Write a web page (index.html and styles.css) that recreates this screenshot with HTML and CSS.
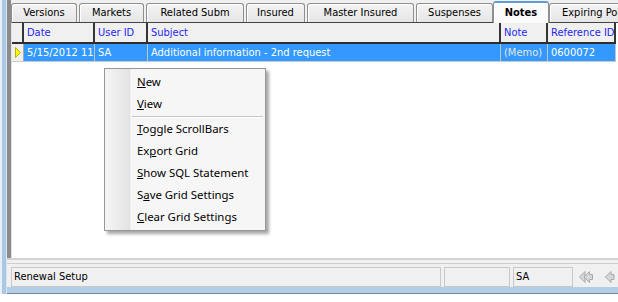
FILE: index.html
```html
<!DOCTYPE html>
<html lang="en">
<head>
    <meta charset="UTF-8">
    <title>Notes</title>
    <link rel="stylesheet" href="styles.css">
</head>
<body>
    <div class="window">
        <div class="tabpane">
            <div class="tabs">
                <div class="tab t-versions">Versions</div>
                <div class="tab t-markets">Markets</div>
                <div class="tab t-related">Related Subm</div>
                <div class="tab t-insured">Insured</div>
                <div class="tab t-master">Master Insured</div>
                <div class="tab t-suspenses">Suspenses</div>
                <div class="tab t-notes active">Notes</div>
                <div class="tab t-expiring">Expiring Policies</div>
            </div>
            <div class="grid">
                <div class="row head">
                    <div class="cell ind"></div>
                    <div class="cell">Date</div>
                    <div class="cell">User ID</div>
                    <div class="cell">Subject</div>
                    <div class="cell">Note</div>
                    <div class="cell">Reference ID</div>
                </div>
                <div class="row data selected">
                    <div class="cell ind">
                        <svg width="6" height="11" viewBox="0 0 6 11"><polygon points="0.5,0.5 5.5,5.5 0.5,10.5" fill="#ffff00" stroke="#b8b800" stroke-width="1"/></svg>
                    </div>
                    <div class="cell">5/15/2012 11:19 AM</div>
                    <div class="cell">SA</div>
                    <div class="cell">Additional information - 2nd request</div>
                    <div class="cell memo">(Memo)</div>
                    <div class="cell">0600072</div>
                </div>
            </div>
        </div>
        <div class="statusbar">
            <div class="split"></div>
            <div class="panels">
                <div class="panel p-main">Renewal Setup</div>
                <div class="panel p-mid"></div>
                <div class="panel p-user">SA</div>
                <div class="nav">
                    <svg width="15" height="12" viewBox="0 0 15 12">
                        <polygon points="0.5,6 6,0.5 6,11.5" fill="#d6d6d6" stroke="#a9a9a9"/>
                        <polygon points="5,6 10.5,0.5 10.5,3.5 13.5,3.5 13.5,8.5 10.5,8.5 10.5,11.5" fill="#d6d6d6" stroke="#a9a9a9"/>
                    </svg>
                    <svg width="10" height="12" viewBox="0 0 10 12">
                        <polygon points="0.5,6 6,0.5 6,3.5 9,3.5 9,8.5 6,8.5 6,11.5" fill="#d6d6d6" stroke="#a9a9a9"/>
                    </svg>
                </div>
            </div>
        </div>
    </div>

    <div class="menu">
        <div class="item"><u>N</u>ew</div>
        <div class="item"><u>V</u>iew</div>
        <div class="sep"></div>
        <div class="item"><u>T</u>oggle ScrollBars</div>
        <div class="item">Ex<u>p</u>ort Grid</div>
        <div class="item"><u>S</u>how SQL Statement</div>
        <div class="item">S<u>a</u>ve Grid Settings</div>
        <div class="item"><u>C</u>lear Grid Settings</div>
    </div>
</body>
</html>
```

FILE: styles.css
```css
body {
    margin: 0;
    background: #fff;
    overflow: hidden;
    font-family: "DejaVu Sans Condensed", "Liberation Sans", sans-serif;
    font-size: 11px;
    color: #000;
}

/* window frame: light edge, blue border, then the client area */
.window {
    width: 640px;
    height: 294px;
    box-sizing: border-box;
    padding: 0 0 7px 7px;
    display: flex;
    flex-direction: column;
    background: #f0f0f0;
    box-shadow:
        inset 2px 0 #e9eff5,
        inset 6px 0 #abc7e4,
        inset 7px 0 #d9e6f2,
        inset 0 -1px #6f86a2,
        inset 0 -7px #b5cee8,
        0 5px 4px -2px rgba(0, 0, 0, 0.45);
}

.tabpane {
    height: 258px;
    display: flex;
    flex-direction: column;
    border-left: 4px solid #8b8b8b;
    box-sizing: border-box;
}

.tabs {
    height: 22px;
    flex: none;
    display: flex;
    align-items: flex-end;
    gap: 2px;
}

.tab {
    height: 19px;
    box-sizing: border-box;
    border: 1px solid #8e8f8f;
    border-bottom: none;
    border-radius: 3px 3px 0 0;
    background: linear-gradient(#f3f3f3, #e6e6e6);
    box-shadow: inset 1px 1px #fff;
    text-align: center;
    line-height: 18px;
    white-space: nowrap;
    overflow: hidden;
    flex: none;
}

.t-versions { width: 66px; }
.t-markets { width: 65px; }
.t-related { width: 98px; }
.t-insured { width: 59px; }
.t-master { width: 107px; }
.t-suspenses { width: 77px; }
.t-notes { width: 52px; }
.t-expiring { width: 100px; text-align: left; padding-left: 12px; }

.tab.active {
    height: 22px;
    margin: 0 -2px -1px;
    width: 56px;
    position: relative;
    z-index: 1;
    background: #fbfbfb;
    border-top: 2px solid #5e9ed6;
    font-weight: bold;
    line-height: 19px;
}

.grid {
    flex: 1;
    background: #fff;
    border-top: 1px solid #444;
    border-left: 1px solid #e3e3e3;
}

.row {
    display: grid;
    grid-template-columns: 12px 71px 53px 353px 47px 68px;
    width: max-content;
}

.cell {
    box-sizing: border-box;
    padding-left: 3px;
    white-space: nowrap;
    overflow: hidden;
}

.head {
    height: 21px;
    background: #f0f0f0;
    border-bottom: 2px solid #2e2e2e;
    box-sizing: border-box;
}

.head .cell {
    border-right: 2px solid #353535;
    color: #2727ee;
    line-height: 19px;
}

.data {
    height: 18px;
    border-bottom: 1px solid #c9c9c9;
    box-sizing: border-box;
}

.data .cell {
    line-height: 17px;
    border-right: 1px solid #b8c8d8;
}

.selected .cell {
    background: #3399ff;
    color: #fff;
}

.selected .memo {
    color: #e4e4e4;
}

.data .cell.ind {
    background: #f0f0f0;
    border-right: 1px solid #a8a8a8;
    display: flex;
    align-items: center;
    padding-left: 3px;
}

.statusbar {
    height: 29px;
    display: flex;
    flex-direction: column;
    background: #f0f0f0;
}

.split {
    height: 6px;
    box-sizing: border-box;
    border-top: 2px solid #d3d3d3;
    border-bottom: 1px solid #cdcdcd;
}

.panels {
    display: flex;
    gap: 3px;
    padding: 3px 0 0 4px;
}

.panel {
    height: 20px;
    box-sizing: border-box;
    border: 1px solid #c9c9c9;
    padding-left: 2px;
    line-height: 18px;
}

.p-main { width: 430px; }
.p-mid { width: 66px; }
.p-user { width: 60px; }

.nav {
    display: flex;
    align-items: center;
    gap: 11px;
    padding-left: 3px;
}

/* context menu over the grid */
.menu {
    position: absolute;
    left: 104px;
    top: 68px;
    width: 162px;
    height: 163px;
    box-sizing: border-box;
    padding: 2px;
    border: 1px solid #979797;
    background: linear-gradient(to right, #f5f5f5 0, #e3e3e3 25px, #fafafa 26px, #f6f6f6 27px);
    box-shadow: 3px 3px 3px rgba(0, 0, 0, 0.35);
    font-family: "Noto Sans", "Open Sans", sans-serif;
    font-size: 11.4px;
}

.item {
    height: 22px;
    line-height: 22px;
    padding-left: 30px;
    white-space: nowrap;
}

.sep {
    height: 2px;
    margin: 1px 0 0 25px;
    box-sizing: border-box;
    border-top: 1px solid #c5c5c5;
    border-bottom: 1px solid #fff;
}
```
